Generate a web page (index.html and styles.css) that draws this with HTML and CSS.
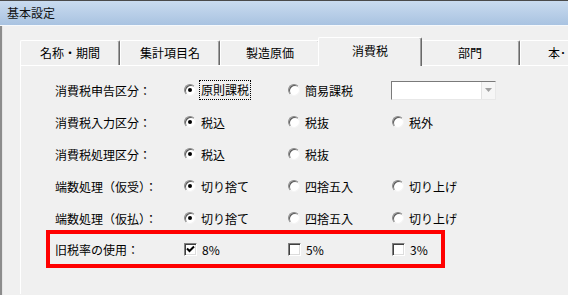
FILE: index.html
```html
<!DOCTYPE html>
<html lang="ja">
<head>
<meta charset="utf-8">
<title>基本設定</title>
<link rel="stylesheet" href="styles.css">
</head>
<body>
<div class="window">
  <div class="titlebar">基本設定</div>
  <div class="client">
    <div class="tabs">
      <div class="tab">名称・期間</div>
      <div class="tab">集計項目名</div>
      <div class="tab">製造原価</div>
      <div class="tab selected">消費税</div>
      <div class="tab">部門</div>
      <div class="tab last">本･</div>
    </div>
    <div class="panel">
      <div class="row">
        <div class="label">消費税申告区分：</div>
        <div class="opt"><span class="radio on"></span><span class="focus">原則課税</span></div>
        <div class="opt"><span class="radio"></span><span>簡易課税</span></div>
        <div class="opt"><div class="combo"><div class="combo-btn"><svg width="7" height="4" viewBox="0 0 7 4"><path d="M0 0h7L3.5 4z" fill="#a0a0a0"/></svg></div></div></div>
      </div>
      <div class="row">
        <div class="label">消費税入力区分：</div>
        <div class="opt"><span class="radio on"></span><span>税込</span></div>
        <div class="opt"><span class="radio"></span><span>税抜</span></div>
        <div class="opt"><span class="radio"></span><span>税外</span></div>
      </div>
      <div class="row">
        <div class="label">消費税処理区分：</div>
        <div class="opt"><span class="radio on"></span><span>税込</span></div>
        <div class="opt"><span class="radio"></span><span>税抜</span></div>
      </div>
      <div class="row">
        <div class="label">端数処理（仮受）：</div>
        <div class="opt"><span class="radio on"></span><span>切り捨て</span></div>
        <div class="opt"><span class="radio"></span><span>四捨五入</span></div>
        <div class="opt"><span class="radio"></span><span>切り上げ</span></div>
      </div>
      <div class="row">
        <div class="label">端数処理（仮払）：</div>
        <div class="opt"><span class="radio on"></span><span>切り捨て</span></div>
        <div class="opt"><span class="radio"></span><span>四捨五入</span></div>
        <div class="opt"><span class="radio"></span><span>切り上げ</span></div>
      </div>
      <div class="row highlight">
        <div class="label">旧税率の使用：</div>
        <div class="opt"><span class="check"><svg width="11" height="11" viewBox="0 0 11 11"><path d="M2 4.5l2.5 2.5L9 2.5" fill="none" stroke="#000" stroke-width="2"/></svg></span><span>8%</span></div>
        <div class="opt"><span class="check"></span><span>5%</span></div>
        <div class="opt"><span class="check"></span><span>3%</span></div>
      </div>
    </div>
  </div>
</div>
</body>
</html>
```

FILE: styles.css
```css
html, body {
  margin: 0;
  padding: 0;
  width: 568px;
  height: 295px;
  overflow: hidden;
  background: #f0f0f0;
  font-family: "Noto Sans CJK JP", "Liberation Sans", sans-serif;
  font-size: 12px;
  color: #000;
}

.window {
  display: flex;
  flex-direction: column;
  height: 295px;
}

.titlebar {
  height: 24px;
  border-top: 1px solid #4a4a4a;
  border-bottom: 1px solid #f6f9fc;
  background: linear-gradient(#c9dbef, #a9c3e1);
  padding-left: 7px;
  line-height: 24px;
  color: #111;
}

.client {
  flex: 1;
  border-left: 2px solid #8c8c8c;
  box-shadow: inset 1px 0 #e6e6e6;
}

.tabs {
  display: flex;
  align-items: flex-end;
  margin-top: 11px;
  padding-left: 18px;
  height: 28px;
  position: relative;
  z-index: 1;
}

.tab {
  flex: 0 0 auto;
  box-sizing: border-box;
  width: 100px;
  height: 25px;
  border-top: 1px solid #fff;
  border-left: 1px solid #fff;
  border-right: 1px solid #696969;
  box-shadow: inset -1px 0 #a0a0a0;
  border-radius: 2px 2px 0 0;
  text-align: center;
  line-height: 23px;
  background: #f0f0f0;
}

.tab.last {
  text-align: left;
  padding-left: 27px;
}

.tab.selected {
  width: 104px;
  height: 29px;
  margin: 0 -2px -1px;
  line-height: 25px;
  position: relative;
  z-index: 2;
}

.panel {
  margin-left: 18px;
  border-top: 1px solid #fff;
  border-left: 1px solid #fff;
  padding: 8px 0 0 34px;
  height: 220px;
}

.row {
  display: flex;
  align-items: center;
  height: 32px;
}

.label {
  width: 129px;
  flex: 0 0 auto;
  white-space: nowrap;
}

.opt {
  width: 104px;
  flex: 0 0 auto;
  display: flex;
  align-items: center;
  gap: 5px;
  white-space: nowrap;
}

.radio {
  box-sizing: border-box;
  width: 12px;
  height: 12px;
  border-radius: 50%;
  border: 1px solid;
  border-color: #8a8a8a #f4f4f4 #f4f4f4 #8a8a8a;
  background: #fff;
  box-shadow: inset 1px 1px #5a5a5a;
  display: flex;
  align-items: center;
  justify-content: center;
}

.radio.on::after {
  content: "";
  width: 4px;
  height: 4px;
  border-radius: 50%;
  background: #000;
}

.focus {
  border: 1px dotted #000;
  padding: 2px 1px;
  margin-left: -2px;
  line-height: 14px;
}

.combo {
  box-sizing: border-box;
  width: 139px;
  height: 19px;
  margin-left: -1px;
  background: #fff;
  border-top: 1px solid #7a7a7a;
  border-left: 1px solid #7a7a7a;
  border-right: 1px solid #e8e8e8;
  border-bottom: 1px solid #e8e8e8;
  display: flex;
  justify-content: flex-end;
}

.combo-btn {
  width: 13px;
  background: #f6f6f6;
  border-left: 1px solid #e2e2e2;
  display: flex;
  align-items: center;
  justify-content: center;
}

.highlight {
  height: 30px;
  width: 386px;
  margin: -4px 0 0 -9px;
  padding-left: 5px;
  border: 4px solid #f00;
}

.check {
  box-sizing: border-box;
  width: 13px;
  height: 13px;
  border: 1px solid;
  border-color: #808080 #fff #fff #808080;
  box-shadow: inset 1px 1px #404040, inset -1px -1px #dcdcdc;
  background: #fff;
  display: flex;
  align-items: center;
  justify-content: center;
}

.check svg {
  display: block;
}
```
